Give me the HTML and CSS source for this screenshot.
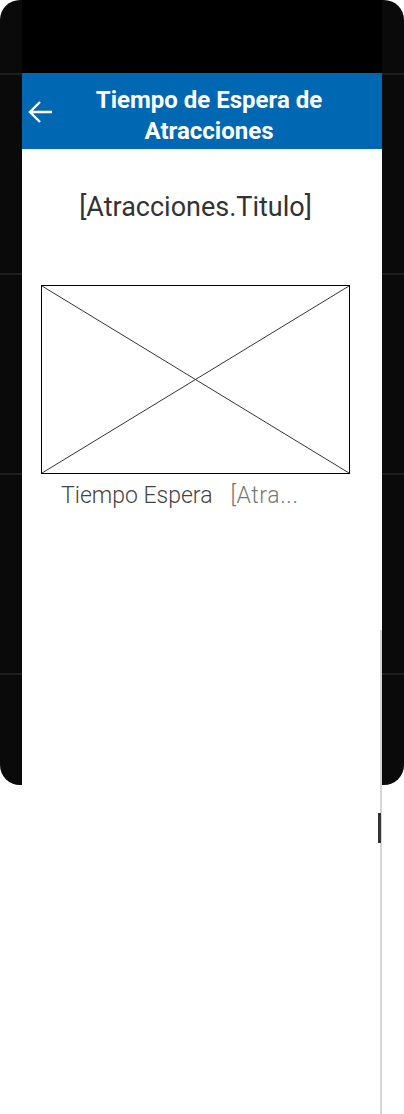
FILE: index.html
```html
<!DOCTYPE html>
<html>
<head>
    <title>Tiempo de Espera de Atracciones</title>
    <link rel="stylesheet" href="styles.css">
</head>
<body>
<div class="device">
    <div class="bezel bezel-left"></div>
    <div class="screen">
        <div class="status-bar"></div>
        <div class="app-header">
            <button class="back-btn" aria-label="Volver">
                <svg width="26" height="26" viewBox="0 0 26 26">
                    <path d="M25 13H3M13 3L3 13L13 23" fill="none" stroke="#fff" stroke-width="2.4"/>
                </svg>
            </button>
            <h1 class="app-title">Tiempo de Espera de Atracciones</h1>
        </div>
        <div class="detail">
            <h2 class="detail-title">[Atracciones.Titulo]</h2>
            <div class="placeholder-img">
                <svg viewBox="0 0 100 100" preserveAspectRatio="none">
                    <line x1="0" y1="0" x2="100" y2="100" stroke="#333" stroke-width="1" vector-effect="non-scaling-stroke"/>
                    <line x1="100" y1="0" x2="0" y2="100" stroke="#333" stroke-width="1" vector-effect="non-scaling-stroke"/>
                </svg>
            </div>
            <div class="wait-row">
                <span class="wait-label">Tiempo Espera</span>
                <span class="wait-value">[Atra...</span>
            </div>
        </div>
        <div class="scroll-track">
            <div class="scroll-thumb"></div>
        </div>
    </div>
    <div class="bezel bezel-right"></div>
</div>
</body>
</html>
```

FILE: styles.css
```css
body {
    margin: 0;
    background: #fff;
    font-family: Roboto, "Liberation Sans", sans-serif;
}
.device {
    display: flex;
    width: 404px;
    height: 1114px;
    overflow: hidden;
}
.bezel {
    width: 22px;
    height: 785px;
    background-color: #0a0a0a;
    background-image: repeating-linear-gradient(to bottom, transparent 0 73px, #1d1d1d 73px 75px, transparent 75px 200px);
}
.bezel-left {
    border-radius: 20px 0 0 20px;
}
.bezel-right {
    border-radius: 0 20px 20px 0;
}
.screen {
    position: relative;
    width: 360px;
    background: #fff;
}
.status-bar {
    height: 73px;
    background: #000;
}
.app-header {
    display: flex;
    align-items: center;
    height: 76px;
    background: #0068b2;
    padding-right: 22px;
    box-sizing: border-box;
}
.back-btn {
    width: 36px;
    height: 40px;
    padding: 0 0 0 5px;
    margin-top: 1px;
    border: none;
    background: none;
    display: flex;
    align-items: center;
}
.app-title {
    flex: 1;
    margin: 0;
    padding-top: 12px;
    color: #fff;
    font-size: 24px;
    line-height: 31px;
    font-weight: 700;
    text-align: center;
    align-self: flex-start;
}
.detail {
    padding: 41px 32px 0 19px;
}
.detail-title {
    margin: 0;
    font-size: 27px;
    line-height: 34px;
    font-weight: 400;
    color: #333;
    text-align: center;
}
.placeholder-img {
    margin-top: 61px;
    height: 187px;
    border: 1px solid #000;
}
.placeholder-img svg {
    display: block;
    width: 100%;
    height: 100%;
}
.wait-row {
    display: flex;
    gap: 18px;
    margin-top: 8px;
    padding-left: 20px;
    font-size: 23px;
    line-height: 28px;
    font-weight: 300;
}
.wait-label {
    color: #444;
}
.wait-value {
    color: #777;
    letter-spacing: 0.6px;
    white-space: nowrap;
}
.scroll-track {
    position: absolute;
    top: 630px;
    bottom: 0;
    right: 0;
    width: 2px;
    background: #d6d6d6;
}
.scroll-thumb {
    position: absolute;
    top: 183px;
    right: 1px;
    width: 3px;
    height: 30px;
    background: #333;
}
```
